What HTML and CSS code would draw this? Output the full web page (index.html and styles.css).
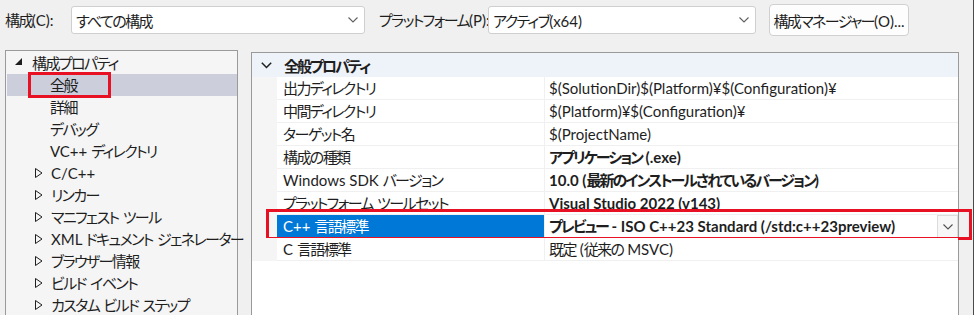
FILE: index.html
```html
<html>

<head>
    <meta charset="UTF-8" />
    <link rel="stylesheet" href="styles.css">
</head>

<body>
    <div id="page">
        <div class="toolbar">
            <span class="lbl lbl-conf"><span class="ja">構成</span>(C):</span>
            <div class="combo combo-conf">
                <span class="ja">すべての構成</span>
                <svg class="chev" width="10" height="6" viewBox="0 0 10 6"><polyline points="0.5,0.5 5,5 9.5,0.5" fill="none" stroke="#606060" stroke-width="1.1"/></svg>
            </div>
            <span class="lbl lbl-plat"><span class="ja">プラットフォーム</span>(P):</span>
            <div class="combo combo-plat">
                <span><span class="ja">アクティブ</span>(x64)</span>
                <svg class="chev" width="10" height="6" viewBox="0 0 10 6"><polyline points="0.5,0.5 5,5 9.5,0.5" fill="none" stroke="#606060" stroke-width="1.1"/></svg>
            </div>
            <button class="btn-mgr"><span class="ja">構成マネージャー</span>(O)...</button>
        </div>

        <div class="main">
            <div class="tree">
                <div class="node root">
                    <svg class="tri" width="8" height="8" viewBox="0 0 8 8"><polygon points="7,0 7,7 0,7" fill="#1e1e1e"/></svg>
                    <span class="ja">構成プロパティ</span>
                </div>
                <div class="node leaf selected"><span class="ja">全般</span><span class="mark mark-tree"></span></div>
                <div class="node leaf"><span class="ja">詳細</span></div>
                <div class="node leaf"><span class="ja">デバッグ</span></div>
                <div class="node leaf">VC++&nbsp;<span class="ja">ディレクトリ</span></div>
                <div class="node sub"><svg class="tri2" width="8" height="10" viewBox="0 0 8 10"><polygon points="0.5,0.5 7,5 0.5,9.5" fill="none" stroke="#1e1e1e" stroke-width="1"/></svg>C/C++</div>
                <div class="node sub"><svg class="tri2" width="8" height="10" viewBox="0 0 8 10"><polygon points="0.5,0.5 7,5 0.5,9.5" fill="none" stroke="#1e1e1e" stroke-width="1"/></svg><span class="ja">リンカー</span></div>
                <div class="node sub"><svg class="tri2" width="8" height="10" viewBox="0 0 8 10"><polygon points="0.5,0.5 7,5 0.5,9.5" fill="none" stroke="#1e1e1e" stroke-width="1"/></svg><span class="ja">マニフェスト ツール</span></div>
                <div class="node sub"><svg class="tri2" width="8" height="10" viewBox="0 0 8 10"><polygon points="0.5,0.5 7,5 0.5,9.5" fill="none" stroke="#1e1e1e" stroke-width="1"/></svg>XML&nbsp;<span class="ja">ドキュメント ジェネレーター</span></div>
                <div class="node sub"><svg class="tri2" width="8" height="10" viewBox="0 0 8 10"><polygon points="0.5,0.5 7,5 0.5,9.5" fill="none" stroke="#1e1e1e" stroke-width="1"/></svg><span class="ja">ブラウザー情報</span></div>
                <div class="node sub"><svg class="tri2" width="8" height="10" viewBox="0 0 8 10"><polygon points="0.5,0.5 7,5 0.5,9.5" fill="none" stroke="#1e1e1e" stroke-width="1"/></svg><span class="ja">ビルド イベント</span></div>
                <div class="node sub"><svg class="tri2" width="8" height="10" viewBox="0 0 8 10"><polygon points="0.5,0.5 7,5 0.5,9.5" fill="none" stroke="#1e1e1e" stroke-width="1"/></svg><span class="ja">カスタム ビルド ステップ</span></div>
            </div>

            <div class="grid">
                <div class="group">
                    <svg class="gchev" width="11" height="7" viewBox="0 0 11 7"><polyline points="0.8,0.8 5.5,5.5 10.2,0.8" fill="none" stroke="#1e1e1e" stroke-width="1.5"/></svg>
                    <span class="ja">全般プロパティ</span>
                </div>
                <div class="prop">
                    <div class="name"><span class="ja">出力ディレクトリ</span></div>
                    <div class="val">$(SolutionDir)$(Platform)¥$(Configuration)¥</div>
                </div>
                <div class="prop">
                    <div class="name"><span class="ja">中間ディレクトリ</span></div>
                    <div class="val">$(Platform)¥$(Configuration)¥</div>
                </div>
                <div class="prop">
                    <div class="name"><span class="ja">ターゲット名</span></div>
                    <div class="val">$(ProjectName)</div>
                </div>
                <div class="prop">
                    <div class="name"><span class="ja">構成の種類</span></div>
                    <div class="val bold"><span class="ja">アプリケーション</span> (.exe)</div>
                </div>
                <div class="prop">
                    <div class="name">Windows SDK <span class="ja">バージョン</span></div>
                    <div class="val bold">10.0 (<span class="ja">最新のインストールされているバージョン</span>)</div>
                </div>
                <div class="prop">
                    <div class="name"><span class="ja">プラットフォーム ツールセット</span></div>
                    <div class="val bold">Visual Studio 2022 (v143)</div>
                </div>
                <div class="prop active">
                    <div class="name">C++ <span class="ja">言語標準</span></div>
                    <div class="val bold"><span class="ja">プレビュー</span> - ISO C++23 Standard (/std:c++23preview)
                        <span class="drop"><svg width="10" height="6" viewBox="0 0 10 6"><polyline points="0.5,0.5 5,5 9.5,0.5" fill="none" stroke="#505050" stroke-width="1.1"/></svg></span>
                    </div>
                    <span class="mark mark-grid"></span>
                </div>
                <div class="prop">
                    <div class="name">C <span class="ja">言語標準</span></div>
                    <div class="val"><span class="ja">既定</span> (<span class="ja">従来の</span> MSVC)</div>
                </div>
            </div>
        </div>
    </div>
</body>

</html>
```

FILE: styles.css
```css
body {
    margin: 0;
    background-color: #f0f0f0;
    font-family: Lato, 'Noto Sans CJK JP', sans-serif;
    font-feature-settings: "palt";
    font-size: 15px;
    color: #1e1e1e;
    overflow: hidden;
}

/* kana in the original UI font are narrow */
.ja {
    letter-spacing: -1.6px;
    word-spacing: 2px;
}

.bold .ja,
.group .ja {
    letter-spacing: -2px;
}

#page {
    width: 974px;
    height: 315px;
    box-sizing: border-box;
    border-right: 1px solid #4a4a4a;
    overflow: hidden;
}

.toolbar {
    display: flex;
    align-items: center;
    height: 40px;
    padding-left: 5px;
    white-space: nowrap;
}

.toolbar > * {
    flex-shrink: 0;
}

.lbl {
    line-height: 20px;
}

.lbl-conf {
    width: 66px;
}

.lbl-plat {
    margin-left: 14px;
    width: 109px;
}

.combo {
    display: flex;
    align-items: center;
    justify-content: space-between;
    box-sizing: border-box;
    height: 28px;
    padding: 0 6px 0 4px;
    background-color: #fff;
    border: 1px solid #cfcfcf;
    border-radius: 3px;
}

.combo-conf {
    width: 294px;
}

.combo-plat {
    width: 268px;
}

.btn-mgr {
    margin-left: 13px;
    box-sizing: border-box;
    width: 140px;
    height: 32px;
    background-color: #fdfdfd;
    border: 1px solid #d0d0d0;
    border-radius: 4px;
    font-family: inherit;
    font-feature-settings: "palt";
    font-size: 15px;
    color: #1e1e1e;
    padding: 0;
    white-space: nowrap;
}

.main {
    display: flex;
    padding-left: 5px;
    margin-top: 10px;
}

.tree {
    box-sizing: border-box;
    width: 233px;
    height: 300px;
    flex-shrink: 0;
    padding-top: 1px;
    background-color: #f5f5f5;
    border: 1px solid #9a9a9a;
}

.node {
    position: relative;
    display: flex;
    align-items: center;
    height: 22px;
    line-height: 22px;
    white-space: nowrap;
}

.node svg {
    flex-shrink: 0;
}

.root {
    padding-left: 9px;
}

.root .tri {
    margin-right: 9px;
    margin-bottom: 2px;
}

.leaf {
    padding-left: 44px;
}

.sub {
    padding-left: 29px;
}

.sub .tri2 {
    margin-right: 8px;
}

.selected {
    background-color: #cccedb;
    margin-left: 1px;
}

.selected.leaf {
    padding-left: 43px;
}

.mark {
    position: absolute;
    border: 3px solid #e81123;
    box-sizing: border-box;
    pointer-events: none;
}

.mark-tree {
    left: 21px;
    top: -2px;
    width: 83px;
    height: 26px;
}

.grid {
    box-sizing: border-box;
    width: 708px;
    height: 300px;
    flex-shrink: 0;
    margin-left: 13px;
    margin-top: 2px;
    background-color: #fff;
    border: 1px solid #9a9a9a;
}

.group {
    display: flex;
    align-items: center;
    height: 24px;
    background-color: #eef3fa;
    font-weight: bold;
}

.gchev {
    margin-left: 9px;
    margin-right: 12px;
}

.prop {
    position: relative;
    display: flex;
    height: 23px;
    background-color: #f5f5f5;
}

.prop .name,
.prop .val {
    box-sizing: border-box;
    height: 23px;
    line-height: 22px;
    border-bottom: 1px solid #f0f0f0;
    background-color: #fff;
    white-space: nowrap;
}

.prop .name {
    margin-left: 25px;
    width: 268px;
    flex-shrink: 0;
    padding-left: 6px;
    border-right: 1px solid #f0f0f0;
}

.prop .val {
    position: relative;
    flex: 1;
    padding-left: 4px;
}

.bold {
    font-weight: bold;
}

.active .name {
    background-color: #0078d7;
    color: #fff;
    border-bottom-color: #0078d7;
}

.drop {
    position: absolute;
    right: 0;
    top: 0;
    display: flex;
    align-items: center;
    justify-content: center;
    box-sizing: border-box;
    width: 21px;
    height: 23px;
    background-color: #f7f7f7;
    border: 1px solid #dcdcdc;
}

.mark-grid {
    left: 14px;
    top: -6px;
    width: 706px;
    height: 31px;
}
```
